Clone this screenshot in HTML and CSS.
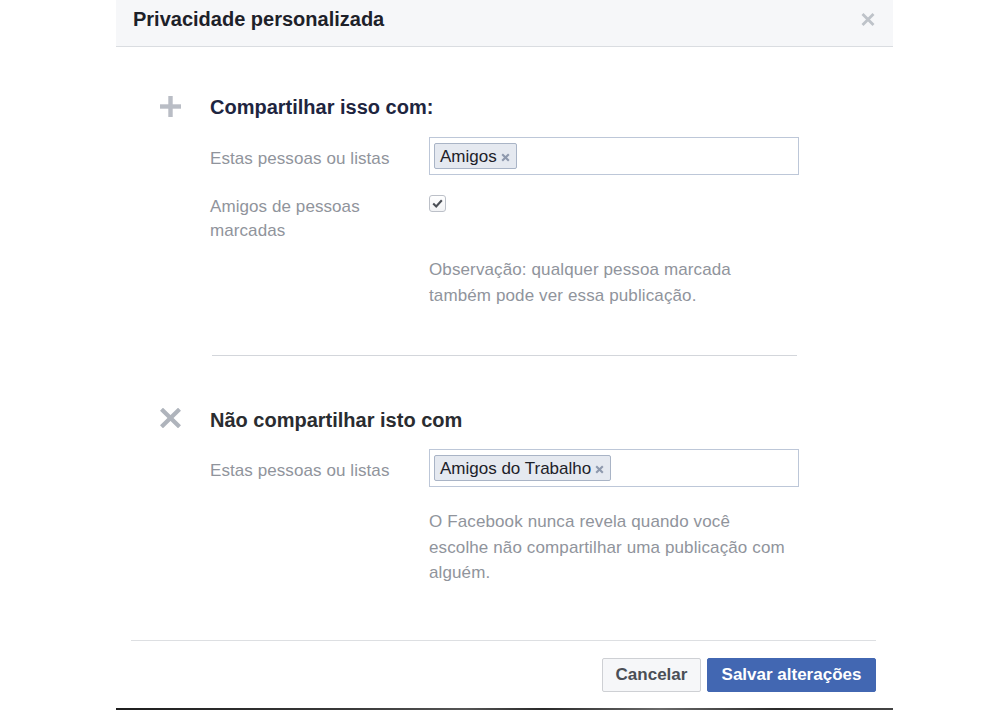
FILE: index.html
```html
<!DOCTYPE html>
<html lang="pt-BR">
<head>
<meta charset="utf-8">
<title>Privacidade personalizada</title>
<link rel="stylesheet" href="styles.css">
</head>
<body>
<div class="dialog">
  <div class="header">
    <h1 class="title">Privacidade personalizada</h1>
    <button class="close" aria-label="Fechar">
      <svg width="14" height="13" viewBox="0 0 14 13"><path d="M1.5 1 L12.5 12 M12.5 1 L1.5 12" stroke="#bec3c9" stroke-width="2.8" fill="none"/></svg>
    </button>
  </div>
  <div class="body">
    <section class="section">
      <div class="sec-icon sec-icon-plus">
        <svg width="21" height="21" viewBox="0 0 21 21"><rect x="8.3" y="0" width="4.4" height="21" fill="#b9bdc5"/><rect x="0" y="8.3" width="21" height="4.4" fill="#b9bdc5"/></svg>
      </div>
      <div class="sec-main">
        <h2 class="sec-title sec-title-share">Compartilhar isso com:</h2>
        <div class="row row-first">
          <div class="label label-input">Estas pessoas ou listas</div>
          <div class="field">
            <div class="tokenbox">
              <span class="token">Amigos<svg class="token-x" width="9" height="9" viewBox="0 0 9 9"><path d="M1.2 1.2 L7.8 7.8 M7.8 1.2 L1.2 7.8" stroke="#8e99ad" stroke-width="2.1" fill="none"/></svg></span>
            </div>
          </div>
        </div>
        <div class="row row-check">
          <div class="label label-multi">Amigos de pessoas<br>marcadas</div>
          <div class="field">
            <span class="checkbox">
              <svg width="17" height="17" viewBox="0 0 17 17"><path d="M4.2 8.6 L7.2 11.4 L12.8 5.2" stroke="#4b4f56" stroke-width="2.1" fill="none"/></svg>
            </span>
          </div>
        </div>
        <div class="row row-note1">
          <div class="label"></div>
          <p class="note">Observação: qualquer pessoa marcada<br>também pode ver essa publicação.</p>
        </div>
      </div>
    </section>
    <hr class="divider">
    <section class="section section-exclude">
      <div class="sec-icon sec-icon-x">
        <svg width="21" height="20" viewBox="0 0 21 20"><path d="M1.5 1.2 L19.5 18.8 M19.5 1.2 L1.5 18.8" stroke="#afb4bc" stroke-width="4.2" fill="none"/></svg>
      </div>
      <div class="sec-main">
        <h2 class="sec-title sec-title-exclude">Não compartilhar isto com</h2>
        <div class="row row-first2">
          <div class="label label-input">Estas pessoas ou listas</div>
          <div class="field">
            <div class="tokenbox">
              <span class="token">Amigos do Trabalho<svg class="token-x" width="9" height="9" viewBox="0 0 9 9"><path d="M1.2 1.2 L7.8 7.8 M7.8 1.2 L1.2 7.8" stroke="#8e99ad" stroke-width="2.1" fill="none"/></svg></span>
            </div>
          </div>
        </div>
        <div class="row row-note2">
          <div class="label"></div>
          <p class="note note2">O Facebook nunca revela quando você<br>escolhe não compartilhar uma publicação com<br>alguém.</p>
        </div>
      </div>
    </section>
  </div>
  <div class="footer">
    <button class="btn btn-cancel">Cancelar</button>
    <button class="btn btn-save">Salvar alterações</button>
  </div>
  <div class="edge"></div>
</div>
</body>
</html>
```

FILE: styles.css
```css
* { box-sizing: border-box; }
html, body { margin: 0; padding: 0; background: #ffffff; }
body {
  font-family: "Liberation Sans", Arial, Helvetica, sans-serif;
  font-size: 17px;
  color: #1d2129;
}
.dialog {
  margin-left: 116px;
  width: 777px;
  background: #ffffff;
}
.header {
  height: 47px;
  background: #f6f7f9;
  border-bottom: 1px solid #dadde1;
  display: flex;
  align-items: flex-start;
  padding: 7px 18px 0 17px;
}
.title {
  margin: 0;
  font-size: 20px;
  line-height: 24px;
  font-weight: bold;
  color: #1d2129;
  flex: 1;
}
.close {
  margin: 6px 0 0 0;
  padding: 0;
  border: 0;
  background: transparent;
  width: 14px;
  height: 13px;
  display: block;
}
.close svg { display: block; }
.body {
  padding: 48px 0 54px 0;
}
.section {
  display: grid;
  grid-template-columns: 50px 370px 1fr;
  padding-left: 44px;
}
.sec-main { grid-column: 2 / 4; }
.sec-icon svg { display: block; }
.sec-icon-plus { padding-top: 1px; }
.sec-icon-x { padding-top: 0; }
.sec-title {
  margin: 0;
  font-size: 20px;
  line-height: 24px;
  font-weight: bold;
}
.sec-title-share { color: #1e2540; }
.sec-title-exclude { color: #2a2c30; }
.row {
  display: grid;
  grid-template-columns: 219px 370px;
}
.row-first { margin-top: 18px; }
.row-check { margin-top: 20px; }
.row-note1 { margin-top: 14px; }
.row-first2 { margin-top: 17px; }
.row-note2 { margin-top: 22px; }
.label {
  color: #90949c;
  font-size: 17px;
  line-height: 25px;
  letter-spacing: 0.08px;
}
.label-input { padding-top: 9px; }
.label-multi { line-height: 24px; }
.tokenbox {
  height: 38px;
  border: 1px solid #bdc7d8;
  padding: 5px 4px;
  display: flex;
  align-items: flex-start;
}
.token {
  display: inline-flex;
  align-items: center;
  height: 26px;
  line-height: 23px;
  padding: 1px 6px 0 5px;
  background: #e5e9f0;
  border: 1px solid #a9b4c6;
  border-radius: 2px;
  color: #1d2129;
  font-size: 17px;
}
.token-x {
  margin-left: 4px;
  margin-top: 1px;
  display: block;
}
.checkbox {
  display: block;
  width: 17px;
  height: 17px;
  border: 1px solid #bcc0c8;
  border-radius: 3px;
  background: linear-gradient(#ffffff, #f2f3f5);
}
.checkbox svg {
  display: block;
  margin: -1px 0 0 -1px;
}
.note {
  margin: 0;
  color: #90949c;
  font-size: 17px;
  line-height: 26px;
  letter-spacing: 0.12px;
  white-space: nowrap;
}
.note2 { line-height: 25.5px; }
.divider {
  margin: 46px 0 0 96px;
  width: 585px;
  height: 1px;
  border: 0;
  background: #d3d6db;
}
.section-exclude { margin-top: 52px; }
.footer {
  margin: 0 17px 0 15px;
  border-top: 1px solid #dddfe2;
  padding: 17px 0 16px 0;
  display: flex;
  justify-content: flex-end;
  gap: 6px;
}
.btn {
  height: 34px;
  font-family: "Liberation Sans", Arial, Helvetica, sans-serif;
  font-size: 17px;
  font-weight: bold;
  line-height: 32px;
  border-radius: 2px;
  padding: 0 12px;
  margin: 0;
  cursor: pointer;
}
.btn-cancel {
  width: 99px;
  background: #f6f7f9;
  border: 1px solid #ced0d4;
  color: #4b4f56;
}
.btn-save {
  width: 169px;
  background: #4267b2;
  border: 1px solid #4267b2;
  color: #ffffff;
}
.edge {
  height: 2px;
  background: linear-gradient(90deg, #1e1e1e 0%, #3a3a3a 30%, #555555 45%, #2a2a2a 55%, #6a6a6a 70%, #2b2b2b 85%, #444444 100%);
}
```
